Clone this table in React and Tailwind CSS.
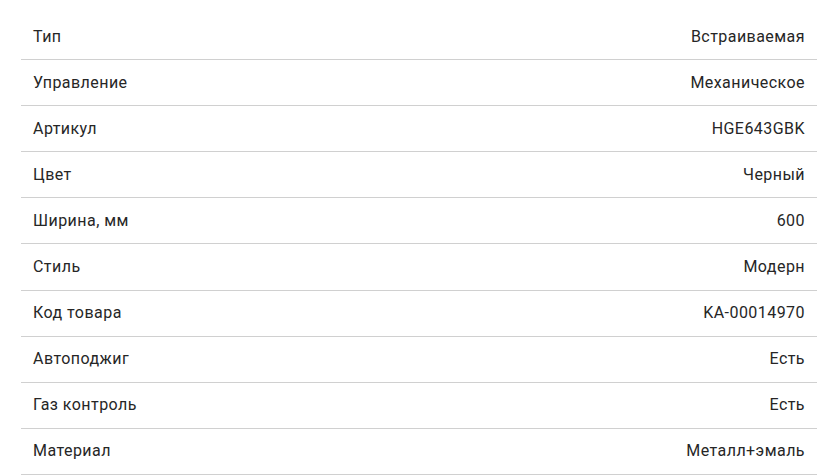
export default function App() {
  const rows = [
    ["Тип", "Встраиваемая"],
    ["Управление", "Механическое"],
    ["Артикул", "HGE643GBK"],
    ["Цвет", "Черный"],
    ["Ширина, мм", "600"],
    ["Стиль", "Модерн"],
    ["Код товара", "KA-00014970"],
    ["Автоподжиг", "Есть"],
    ["Газ контроль", "Есть"],
    ["Материал", "Металл+эмаль"],
  ];
  return (
    <div className="bg-white w-[818px] h-[475px] overflow-hidden pt-[14px] pl-[21px] pr-[1px]" style={{ fontFamily: "Roboto, sans-serif" }}>
      {rows.map(([k, v]) => (
        <div key={k} className="flex items-center justify-between h-[46.1px] border-b border-[#d0d0d0] px-3 text-[16px] tracking-[0.45px] text-[#262626]">
          <span>{k}</span>
          <span>{v}</span>
        </div>
      ))}
    </div>
  );
}
